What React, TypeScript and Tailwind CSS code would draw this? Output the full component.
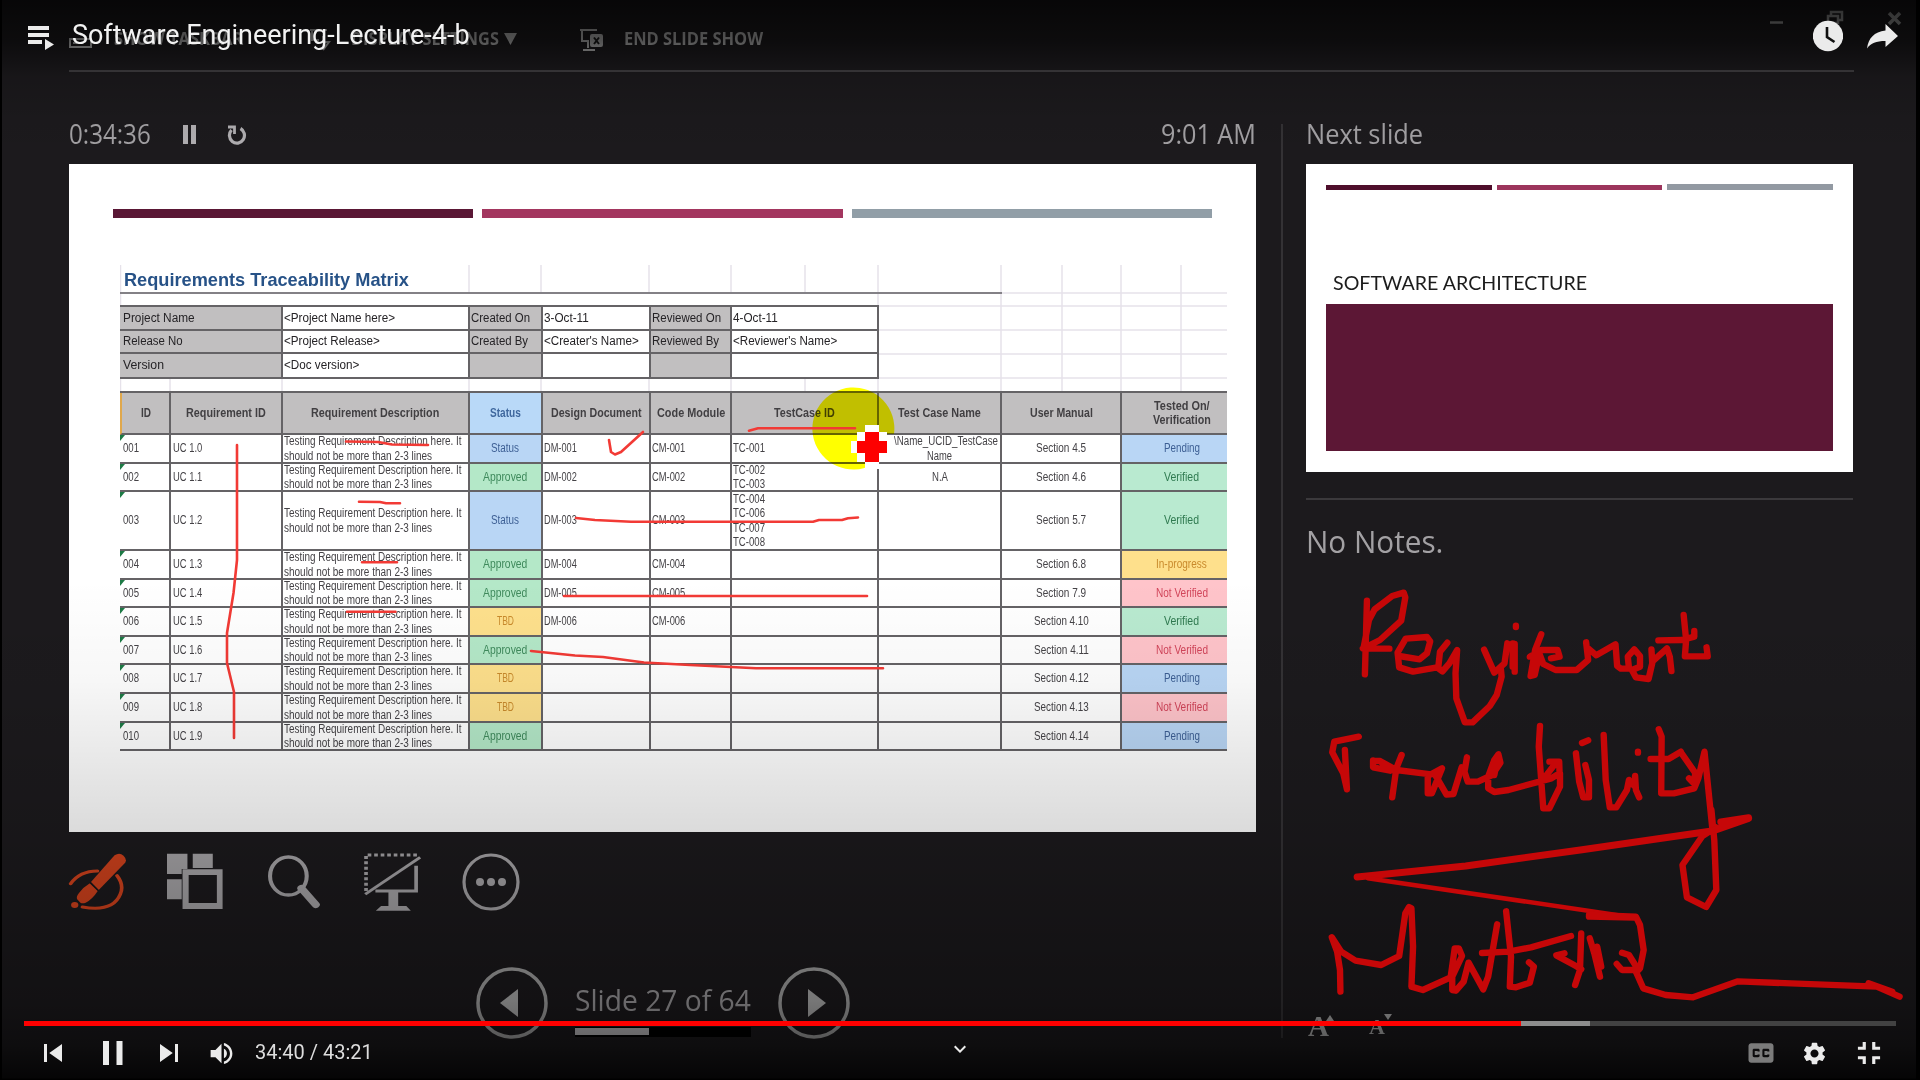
import { useLayoutEffect, useRef, useState, type ReactNode } from "react";
import { MdSettings, MdFullscreenExit, MdKeyboardArrowDown, MdVolumeUp } from "react-icons/md";

/** A single line of text condensed or widened to an exact width. */
function Fit({ w, children, className = "" }: { w: number; children: ReactNode; className?: string }) {
  const ref = useRef<HTMLSpanElement>(null);
  const [k, setK] = useState(1);
  useLayoutEffect(() => {
    if (ref.current) setK(w / ref.current.offsetWidth);
  }, [w]);
  return (
    <span className={"inline-block whitespace-nowrap text-left " + className} style={{ width: w }}>
      <span ref={ref} className="inline-block origin-left" style={{ transform: `scaleX(${k})` }}>
        {children}
      </span>
    </span>
  );
}

const statusStyle: Record<string, string> = {
  Status: "bg-[#b9d6f5] text-[#3d5f94]",
  Pending: "bg-[#b9d6f5] text-[#3d5f94]",
  Approved: "bg-[#b4e8c8] text-[#3f8a5c]",
  Verified: "bg-[#b9ead0] text-[#2f7a50]",
  TBD: "bg-[#fee08c] text-[#c98a2c]",
  "In-progress": "bg-[#fee08c] text-[#c98a2c]",
  "Not Verified": "bg-[#ffc4ca] text-[#d2455a]",
};
const widths: Record<string, number> = {
  Status: 28, Pending: 36, Approved: 44, Verified: 35, TBD: 17, "In-progress": 51, "Not Verified": 52,
};

type Row = { id: string; uc: string; status: string; doc: string; tcs: string[]; name: string[]; section: string; tested: string };
const rows: Row[] = [
  { id: "001", uc: "1.0", status: "Status", doc: "001", tcs: ["TC-001"], name: ["\\Name_UCID_TestCase", "Name"], section: "4.5", tested: "Pending" },
  { id: "002", uc: "1.1", status: "Approved", doc: "002", tcs: ["TC-002", "TC-003"], name: ["N.A"], section: "4.6", tested: "Verified" },
  { id: "003", uc: "1.2", status: "Status", doc: "003", tcs: ["TC-004", "TC-006", "TC-007", "TC-008"], name: [], section: "5.7", tested: "Verified" },
  { id: "004", uc: "1.3", status: "Approved", doc: "004", tcs: [], name: [], section: "6.8", tested: "In-progress" },
  { id: "005", uc: "1.4", status: "Approved", doc: "005", tcs: [], name: [], section: "7.9", tested: "Not Verified" },
  { id: "006", uc: "1.5", status: "TBD", doc: "006", tcs: [], name: [], section: "4.10", tested: "Verified" },
  { id: "007", uc: "1.6", status: "Approved", doc: "", tcs: [], name: [], section: "4.11", tested: "Not Verified" },
  { id: "008", uc: "1.7", status: "TBD", doc: "", tcs: [], name: [], section: "4.12", tested: "Pending" },
  { id: "009", uc: "1.8", status: "TBD", doc: "", tcs: [], name: [], section: "4.13", tested: "Not Verified" },
  { id: "010", uc: "1.9", status: "Approved", doc: "", tcs: [], name: [], section: "4.14", tested: "Pending" },
];

const cell = "flex flex-col justify-center border-r-2 border-b-2 border-[#656366] overflow-hidden";
const lastCell = "flex flex-col justify-center items-center border-b-2 border-[#656366] overflow-hidden pl-[14px]";
const nameWidth: Record<string, number> = { "\\Name_UCID_TestCase": 104, Name: 25, "N.A": 16 };

function DataRow({ r }: { r: Row }) {
  return (
    <>
      <div className={cell + " relative pl-[3px]"}>
        <i className="absolute left-0 top-0 border-t-[6px] border-r-[5px] border-t-[#1c7a45] border-r-transparent" />
        <Fit w={16}>{r.id}</Fit>
      </div>
      <div className={cell + " pl-[2px]"}><Fit w={29}>UC {r.uc}</Fit></div>
      <div className={cell + " pl-px"}>
        <Fit w={177.5}>Testing Requirement Description here. It</Fit>
        <Fit w={148}>should not be more than 2-3 lines</Fit>
      </div>
      <div className={cell + " items-center pr-px " + statusStyle[r.status]}><Fit w={widths[r.status]}>{r.status}</Fit></div>
      <div className={cell + " pl-px"}>{r.doc && <Fit w={33}>DM-{r.doc}</Fit>}</div>
      <div className={cell + " pl-px"}>{r.doc && <Fit w={33.5}>CM-{r.doc}</Fit>}</div>
      <div className={cell + " pl-px"}>{r.tcs.map((t) => <Fit key={t} w={32}>{t}</Fit>)}</div>
      <div className={cell + " items-center"}>
        {r.name.map((n) => <Fit key={n} w={nameWidth[n]} className={n.startsWith("\\") ? "translate-x-[6px]" : ""}>{n}</Fit>)}
      </div>
      <div className={cell + " items-center"}><Fit w={r.section.length > 3 ? 55 : 50}>Section {r.section}</Fit></div>
      <div className={lastCell + " " + statusStyle[r.tested]}><Fit w={widths[r.tested]}>{r.tested}</Fit></div>
    </>
  );
}

const heads: [string, number][] = [
  ["ID", 10], ["Requirement ID", 80], ["Requirement Description", 128.5], ["Status", 31],
  ["Design Document", 90.5], ["Code Module", 68], ["TestCase ID", 61], ["Test Case Name", 83], ["User Manual", 62.5],
];

type Meta = [string, number];
const meta: Meta[][] = [
  [["Project Name", 72], ["<Project Name here>", 111], ["Created On", 59], ["3-Oct-11", 45], ["Reviewed On", 69], ["4-Oct-11", 45]],
  [["Release No", 60], ["<Project Release>", 96], ["Created By", 57], ["<Creater's Name>", 95], ["Reviewed By", 67], ["<Reviewer's Name>", 104.5]],
  [["Version", 41], ["<Doc version>", 75], ["", 0], ["", 0], ["", 0], ["", 0]],
];

function Matrix() {
  return (
    <div className="relative ml-[51px] mt-[43px] w-[1107px] font-['Liberation_Sans',sans-serif] text-[12px] leading-[14.3px] text-[#444246]">
      {/* faint spreadsheet gridlines */}
      <svg className="absolute left-0 top-0" width="1107" height="132" fill="none" stroke="#e6e2ea" strokeWidth="1.5">
        <path d="M0.5 4V132M349 4V32M421 4V32M529 4V32M611 4V32M685 4V32M758 4V132M881 4V132M942 4V132M1001 4V132M1061 4V132M758 32H1107M758 45H1107M758 69H1107M758 93H1107M758 117H1107M50 117V132M162 117V132M349 117V132M421 117V132M529 117V132M611 117V132M685 117V132" />
      </svg>
      <div className="relative flex h-[33px] w-[882px] items-end border-b-2 border-[#838186] pb-[2px] pl-[4px] text-[19px] leading-[20px] font-bold text-[#275287]">
        <Fit w={285}>Requirements Traceability Matrix</Fit>
      </div>
      <div className="relative mt-[11px] grid w-[759px] grid-cols-[163px_187px_73px_108px_81px_147px] grid-rows-[24px_23px_25px] border-t-2 border-[#656366] text-[#252326]">
        {meta.flatMap((m, y) =>
          m.map(([t, w], x) => (
            <div key={`${y}-${x}`} className={cell + (x ? " pl-px " : " pl-[3px] ") + (x % 2 ? "bg-white" : "bg-[#c1bfc0]")}>
              {t && <Fit w={w}>{t}</Fit>}
            </div>
          ))
        )}
      </div>
      <div className="relative mt-[12px] grid w-[1107px] grid-cols-[51px_112px_187px_73px_108px_81px_147px_123px_120px_105px] grid-rows-[42px_29px_28px_59px_29px_28px_29px_28px_29px_29px_28px] border-t-2 border-[#656366]">
        {heads.map(([t, w], i) => (
          <div key={t} className={cell + " items-center font-bold " + (i === 3 ? "bg-[#b9d9f8] text-[#3f689e]" : "bg-[#c1bfc0] text-[#413f42]") + (i === 0 ? " border-l-2 border-l-[#e0a84c]" : "")}>
            <Fit w={w}>{t}</Fit>
          </div>
        ))}
        <div className={lastCell + " bg-[#c1bfc0] font-bold text-[#413f42]"}>
          <Fit w={55.5}>Tested On/</Fit>
          <Fit w={58}>Verification</Fit>
        </div>
        {rows.map((r) => <DataRow key={r.id} r={r} />)}
      </div>
    </div>
  );
}

/** Pen marks made on the slide plus the highlighted cursor. */
function SlideMarks() {
  return (
    <>
      <svg className="absolute left-0 top-0 mix-blend-multiply" width="1187" height="668" viewBox="69 164 1187 668">
        <path d="M894 434A41 41 0 1 0 872 465V434Z" fill="#ffff00" />
      </svg>
      <svg className="absolute left-0 top-0" width="1187" height="668" viewBox="69 164 1187 668" fill="none" stroke="#f23a35" strokeWidth="2.6" strokeLinecap="round" strokeLinejoin="round">
        <path d="M346 441.5L378 442L392 444.500L428 445" />
        <path d="M237 445V560L233.500 593L227 633V663L234 692V738" />
        <path d="M609 440L611 452L615 454.500L621 452L643 432" />
        <path d="M359 501.700L380 502L386 503.300H400M362 562.300H397M347 611.700H395.500" />
        <path d="M576 518L595 520L631 521.700H813L819 520H842L848 518.300L858 517.500" />
        <path d="M564 596H867" />
        <path d="M531 651L575 655.500L603 657L644 662.500L690 665L731 667L756 668.300H883" />
        <path d="M749 430.700L758 428.300H855" />
        <path stroke="none" fill="#fff" d="M865 425h14v44h-14zM851 441h42v12h-42zM857 432h30v30h-30z" />
        <path stroke="none" fill="#fd0000" d="M865 432h14v30h-14zM857 441h30v12h-30z" />
      </svg>
    </>
  );
}

function Tools() {
  return (
    <div className="-ml-[2px] mt-[21px] flex h-[59px] text-[#a9a7aa]">
      <svg className="h-[59px] w-[61px]" viewBox="165 98 150 177" preserveAspectRatio="none" fill="#d5431d">
        <path d="M174 190Q196 152 240 152M288 166Q306 194 296 222Q278 276 203 260" fill="none" stroke="#d5431d" strokeWidth="9" strokeLinecap="round" />
        <path d="M282 105Q294 95 304 106Q313 117 308 127L243 209L224 185Z" />
        <path d="M222 188L241 211Q228 236 211 247Q203 251 198 247L190 237Q187 230 194 219Q205 200 222 188Z" />
        <path d="M221 186L242 211" stroke="#18171a" strokeWidth="4" />
        <circle cx="184" cy="254" r="9" />
      </svg>
      <svg className="ml-[39px] h-[59px] w-[56px]" viewBox="410 98 137 177" preserveAspectRatio="none" fill="currentColor">
        <path d="M410 100h50v46h-14v15h-36zM473 100h49v43h-49zM410 177h36v60h-36z" />
        <path fillRule="evenodd" d="M448 147h98v119h-98zm15 17v84h69v-84z" />
      </svg>
      <svg className="ml-[45px] h-[59px] w-[53px]" viewBox="657 98 130 177" preserveAspectRatio="none" fill="none" stroke="currentColor">
        <ellipse cx="707" cy="167" rx="45" ry="57" strokeWidth="10" />
        <path d="M739 204L774 253" strokeWidth="20" strokeLinecap="round" />
      </svg>
      <svg className="ml-[43px] h-[59px] w-[57px]" viewBox="892 98 140 177" preserveAspectRatio="none" fill="none" stroke="currentColor">
        <path d="M1022 104H897V215" strokeWidth="9" strokeDasharray="9 7" />
        <path d="M895 222L1030 111" strokeWidth="8" />
        <path d="M1020 136V212H920" strokeWidth="9" />
        <path d="M952 212h24v45h20l11 14h-86l13-14h18z" fill="currentColor" stroke="none" />
      </svg>
      <svg className="ml-[41px] h-[59px] w-[58px]" viewBox="0 0 58 59" fill="none" stroke="currentColor" strokeWidth="3.2">
        <circle cx="29" cy="29" r="27" />
        <path d="M18 29h.01M29 29h.01M40 29h.01" strokeWidth="8" strokeLinecap="round" />
      </svg>
    </div>
  );
}

function TopStrip() {
  return (
    <div className="ml-[67px] h-[72px] w-[1785px] border-b-2 border-[#434144] text-[17.5px] font-bold text-[#b8b8b8]">
      <div className="flex h-[72px] items-start">
        <svg className="mt-[30px]" width="24" height="18" fill="none" stroke="currentColor" strokeWidth="2"><path d="M1 9H22V17H1ZM4 13H8" /></svg>
        <span className="ml-[21px] mt-[26px] leading-6"><Fit w={129}>SHOW TASKBAR</Fit></span>
        <svg className="ml-[66px] mt-[28px]" width="22" height="24" fill="none" stroke="currentColor" strokeWidth="2"><path d="M1 2H18M3 2V12H10M14 8V14H20L14 22" /></svg>
        <span className="ml-[20px] mt-[26px] leading-6"><Fit w={148}>DISPLAY SETTINGS</Fit></span>
        <svg className="ml-[5px] mt-[33px]" width="13" height="12" fill="currentColor"><path d="M0 0H13L6.500 12Z" /></svg>
        <svg className="ml-[63px] mt-[28px]" width="24" height="24" fill="none" stroke="currentColor" strokeWidth="2">
          <path d="M0 2H17M2 2V13H8V20M3 22H15" />
          <rect x="11" y="7" width="11" height="11" rx="1" fill="currentColor" />
          <path d="M14 9.500L19 16M19 9.500L14 16" stroke="#1a1a1a" />
        </svg>
        <span className="ml-[20px] mt-[26px] leading-6"><Fit w={139}>END SLIDE SHOW</Fit></span>
        <svg className="-mr-[50px] ml-auto mt-[9px]" width="134" height="20" fill="none" stroke="#a4a4a4" strokeWidth="2.500">
          <path d="M0 13.500H13M61 7V3H72V11H69M58 7H68V14H58Z" /><path d="M119 4L130 15M130 4L119 15" strokeWidth="3.500" />
        </svg>
      </div>
    </div>
  );
}

function RoundArrow({ d }: { d: string }) {
  return (
    <svg width="72" height="72" viewBox="0 0 72 72">
      <circle cx="36" cy="36" r="34" fill="none" stroke="#a8a8a8" strokeWidth="3.500" />
      <path d={d} fill="#b4b4b4" />
    </svg>
  );
}

function PresenterView() {
  return (
    <div className="flex h-[1080px] w-[1914px] flex-col overflow-hidden bg-[#1c1a1d] font-['Open_Sans',sans-serif] text-[#a3a1a4]">
      <TopStrip />
      <div className="flex h-[1008px] pl-[67px]">
        <div className="w-[1187px]">
          <div className="flex h-[92px] items-start pt-[46px] text-[26.5px] leading-[32px]">
            <Fit w={82}>0:34:36</Fit>
            <svg className="ml-[32px] mt-[7px]" width="14" height="19" fill="#b0aeb1"><path d="M0 0h5v19h-5zM8 0h5v19h-5z" /></svg>
            <svg className="ml-[30px] mt-[6px]" width="20" height="21" fill="none" stroke="#b0aeb1" strokeWidth="3.200">
              <path d="M13.500 4.500A7.500 7.800 0 1 1 4.500 6" /><path d="M1 3H7.500V10" strokeWidth="2.800" />
            </svg>
            <span className="ml-auto"><Fit w={95}>9:01 AM</Fit></span>
          </div>
          <div className="relative h-[668px] w-[1187px] bg-white pt-[45px]">
            <div className="ml-[44px] flex h-[9px] w-[1099px] gap-[9px]">
              <div className="flex-1 bg-[#5a1735]" />
              <div className="flex-1 bg-[#a3365f]" />
              <div className="flex-1 bg-[#919ea7]" />
            </div>
            <Matrix />
            <SlideMarks />
          </div>
          <Tools />
          <div className="mt-[55px] flex pl-[407px]">
            <RoundArrow d="M24 36L42 22V50Z" />
            <div className="ml-[27px] w-[178px] pt-[12px]">
              <div className="h-[48px] text-[29.5px] leading-[42px]"><Fit w={176}>Slide 27 of 64</Fit></div>
              <div className="h-[10px] w-[176px] bg-black pt-px"><div className="h-[7px] w-[74px] bg-[#c4c2c5]" /></div>
            </div>
            <div className="ml-[25px]"><RoundArrow d="M48 36L30 22V50Z" /></div>
          </div>
        </div>
        <div className="ml-[25px] mt-[52px] h-[914px] w-[2px] bg-[#343235]" />
        <div className="ml-[23px] w-[549px]">
          <div className="h-[92px] pt-[46px] text-[26.5px] leading-[32px]"><Fit w={117}>Next slide</Fit></div>
          <div className="h-[308px] w-[547px] bg-white px-[20px] pt-[20px]">
            <div className="flex h-[6px] items-end gap-[5px]">
              <div className="h-[5px] flex-1 bg-[#4f0f2c]" />
              <div className="h-[5px] flex-1 bg-[#9c355c]" />
              <div className="h-[6px] flex-1 bg-[#9299a2]" />
            </div>
            <div className="mt-[77px] h-[37px] pl-[7px] font-['Lato',sans-serif] text-[20px] leading-[30px] text-[#1c1c1c]"><Fit w={254}>SOFTWARE ARCHITECTURE</Fit></div>
            <div className="h-[147px] bg-[#5c1735]" />
          </div>
          <div className="mt-[26px] h-[2px] w-[547px] bg-[#3b393c]" />
          <div className="pt-[20px] text-[31px] leading-[42px]"><Fit w={137}>No Notes.</Fit></div>
          <div className="mt-[452px] flex items-end pl-[2px] font-['Liberation_Serif',serif] font-bold text-[#b4b4b4]">
            <span className="text-[29px] leading-[24px]">A</span>
            <svg className="-ml-[3px] mb-[17px]" width="8" height="6" fill="currentColor"><path d="M0 6L4 0L8 6Z" /></svg>
            <span className="ml-[35px] text-[22px] leading-[22px]">A</span>
            <svg className="-ml-px mb-[18px]" width="8" height="6" fill="currentColor"><path d="M0 0H8L4 6Z" /></svg>
          </div>
        </div>
      </div>
    </div>
  );
}

/** Freehand annotation drawn over the video. */
function Ink() {
  return (
    <svg className="absolute left-0 top-0" width="1920" height="1080" fill="none" stroke="#c60708" strokeWidth="6.400" strokeLinecap="round" strokeLinejoin="round">
      <g transform="translate(1280 560) scale(.40816 .33333)" className="*:[vector-effect:non-scaling-stroke]">
        <path d="M213 122L208 343M205 262L218 180L232 148L275 108L303 98L307 112L297 182L245 240L203 266H268" />
        <path d="M292 288L342 298L360 280L368 244L360 231L308 236L288 278L292 322L326 335L385 322L398 334L415 310L434 270L430 340L432 415L453 487H472L514 438L531 405L543 350L541 325M410 248L392 275L388 320" />
        <path d="M500 269L525 338L550 310L557 250M575 252L575 335M570 250V320M578 197V201" />
        <path d="M640 223L625 270L614 348L624 345L634 290L612 290L640 270L680 270L685 290L664 295M632 270L645 312L675 330H727L755 300L750 247M755 265L775 286L822 253L826 318L835 326L855 325L852 290L868 268L882 288L882 320L862 330L872 352L903 357L912 310L910 268L912 305L948 265L955 290L959 333" />
        <path d="M989 165L995 240L992 289H1048L1045 262M927 241L985 240L1015 230V213" />
        <path d="M193 530L133 545L128 577L155 640L164 688L159 570" />
        <path d="M228 601V622L270 632L245 603H228M245 603L285 630L370 643L397 625L372 700H362V650M298 585L285 625L275 712M378 640L408 704L425 702L445 622" />
        <path d="M458 592L452 635L460 665H485L520 645L540 608L535 583L525 600L510 650V685L525 696L560 690L665 655L685 640L684 605H660M637 498L634 560L645 745H660L686 680V640M535 585L525 645M650 650L675 610" />
        <path d="M725 580L733 665L743 712H757V660L748 615M740 549L755 541M793 525L798 660L808 742H824L850 690L855 660L868 678L870 648L872 690L880 712M877 575V578" />
        <path d="M928 508L935 530L934 700H965L1015 685L1025 655L1040 575L1060 815M908 597H952L982 575M984 580L1018 640L1012 668L1002 655" />
      </g>
      <g transform="translate(1280 810) scale(.40816 .33333)" className="*:[vector-effect:non-scaling-stroke]">
        <path d="M1057 0L1064 90L1069 240L1044 291L997 262L986 165L1035 78L1068 52" />
        <path d="M189 201L455 168L740 119L1062 62L1148 25M1080 36L1148 23" strokeWidth="7" />
        <path d="M215 205L870 323" strokeWidth="4.500" />
        <path d="M757 315L872 320L882 345L891 420L882 475L872 485L890 535L945 555L1012 562L1122 514L1462 530L1518 560M757 320L870 323M1442 520L1500 545" />
        <path d="M838 428L855 435L878 480L838 480L825 462" />
        <path d="M148 545L147 480L140 425L127 382L150 425L185 452L248 465L292 438L307 310L316 291L322 295L326 410L322 530L350 540L418 502L428 415H438L446 438L422 500V540L431 542L450 515L462 458L498 538L510 500L532 343" />
        <path d="M554 304L566 440L563 530L578 532L612 518L622 470L610 457M495 429L560 425L615 412L713 378" />
        <path d="M697 430L677 436L725 468L738 478M738 370L735 480L723 525M759 385L770 430L784 500M777 410L787 470" />
      </g>
    </svg>
  );
}

function PlayerControls() {
  return (
    <div className="absolute inset-0 flex flex-col justify-between font-['Roboto',sans-serif] text-[#ebebeb]">
      <div className="flex h-[72px] items-center pl-[28px] pr-[22px]">
        <svg width="27" height="26" viewBox="0 0 27 26" fill="currentColor" className="mt-[4px]">
          <path d="M0 1H21V5H0ZM0 8H21V12H0ZM0 15H14V19H0ZM17 14L26 19.500L17 25Z" />
        </svg>
        <span className="ml-[17px] -mt-[1px] text-[27px] text-[#f2f2f2]"><Fit w={398}>Software Engineering-Lecture-4-b</Fit></span>
        <svg className="ml-auto" width="30" height="32" viewBox="0 0 30 32">
          <circle cx="15" cy="16" r="15.200" fill="currentColor" />
          <path d="M14 7V17L21.500 22" fill="none" stroke="#111" strokeWidth="2.600" />
        </svg>
        <svg className="ml-[24px]" width="31" height="26" viewBox="0 0 31 26" fill="currentColor">
          <path d="M18.500 1L31 13L18.500 24V18C9 18 4 20 0 25.500C1.500 15 7 9 18.500 7.500Z" />
        </svg>
      </div>
      <div className="flex flex-col">
        <div className="mx-[24px] flex h-[5px] bg-[#424242]">
          <div className="w-[1497px] bg-[#ff0000]" />
          <div className="w-[69px] bg-[#8d8d8d]" />
        </div>
        <div className="relative flex h-[54px] items-center">
          <svg className="ml-[26px]" width="54" height="54" viewBox="0 0 36 36" fill="currentColor"><path d="M12 12h2v12h-2zM15.500 18l8.500 6V12z" /></svg>
          <svg className="ml-[5px]" width="54" height="54" viewBox="0 0 36 36" fill="currentColor"><path d="M12 26h4V10h-4zM21 26h4V10h-4z" /></svg>
          <svg className="ml-[3px]" width="54" height="54" viewBox="0 0 36 36" fill="currentColor"><path d="M12 24l8.500-6L12 12zM22 12v12h2V12z" /></svg>
          <MdVolumeUp className="ml-[11px]" size={29} />
          <span className="ml-[19px] text-[19.5px] text-[#dddddd]"><Fit w={118}>34:40 / 43:21</Fit></span>
          <MdKeyboardArrowDown className="absolute left-[948px] top-[11px]" size={24} />
          <svg className="ml-auto text-[#7b7b7b]" width="50" height="50" viewBox="0 0 36 36" fill="currentColor">
            <path d="M11 11c-1.110 0-2 .9-2 2v10c0 1.100.890 2 2 2h14c1.100 0 2-.9 2-2V13c0-1.100-.9-2-2-2zM17 17h-1.500v-.5h-2v3h2V19H17v1c0 .55-.45 1-1 1h-3c-.55 0-1-.45-1-1v-4c0-.55.45-1 1-1h3c.55 0 1 .45 1 1zM24 17h-1.500v-.5h-2v3h2V19H24v1c0 .55-.45 1-1 1h-3c-.55 0-1-.45-1-1v-4c0-.55.45-1 1-1h3c.55 0 1 .45 1 1z" />
          </svg>
          <MdSettings className="ml-[15px]" size={27} />
          <MdFullscreenExit className="ml-[22px] mr-[32px]" size={38} />
        </div>
      </div>
    </div>
  );
}

export default function App() {
  return (
    <div className="relative h-[1080px] w-[1920px] overflow-hidden bg-black pl-[2px]">
      <PresenterView />
      <div className="absolute inset-0 bg-[linear-gradient(to_bottom,rgba(0,0,0,.74)_0px,rgba(0,0,0,.56)_40px,rgba(0,0,0,.3)_64px,rgba(0,0,0,.16)_76px,rgba(0,0,0,.04)_120px,transparent_160px,transparent_580px,rgba(0,0,0,.03)_680px,rgba(0,0,0,.09)_760px,rgba(0,0,0,.14)_832px,rgba(0,0,0,.23)_900px,rgba(0,0,0,.34)_1000px,rgba(0,0,0,.5)_1045px,rgba(0,0,0,.8)_1078px,#000_1079px)]" />
      <Ink />
      <PlayerControls />
    </div>
  );
}
